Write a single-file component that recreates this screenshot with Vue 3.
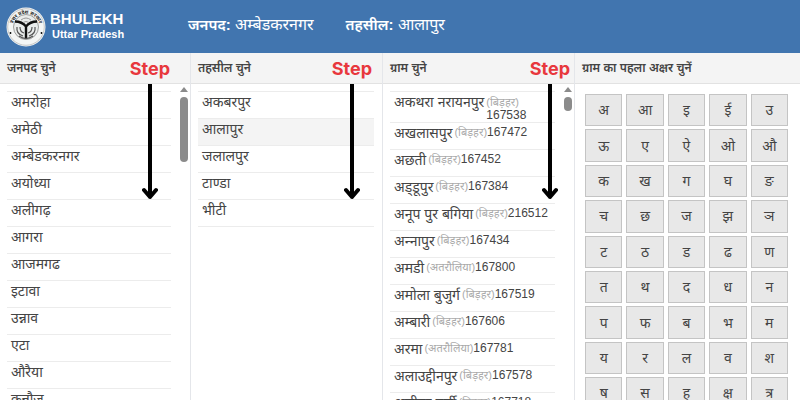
<script setup>
import { ref } from 'vue'

const districts = ['अमरोहा', 'अमेठी', 'अम्बेडकरनगर', 'अयोध्या', 'अलीगढ़', 'आगरा', 'आजमगढ', 'इटावा', 'उन्नाव', 'एटा', 'औरैया', 'कन्नौज']
const tehsils = ['अकबरपुर', 'आलापुर', 'जलालपुर', 'टाण्डा', 'भीटी']
const villages = [
  { name: 'अकथरा नरायनपुर', pargana: 'बिड़हर', code: '167538', wrap: true },
  { name: 'अखलासपुर', pargana: 'बिड़हर', code: '167472' },
  { name: 'अछती', pargana: 'बिड़हर', code: '167452' },
  { name: 'अड्\u200Cडूपुर', pargana: 'बिड़हर', code: '167384' },
  { name: 'अनूप पुर बगिया', pargana: 'बिड़हर', code: '216512' },
  { name: 'अन्\u200Dनापुर', pargana: 'बिड़हर', code: '167434' },
  { name: 'अमडी', pargana: 'अतरौलिया', code: '167800' },
  { name: 'अमोला बुजुर्ग', pargana: 'बिड़हर', code: '167519' },
  { name: 'अम्बारी', pargana: 'बिड़हर', code: '167606' },
  { name: 'अरमा', pargana: 'अतरौलिया', code: '167781' },
  { name: 'अलाउद्दीनपुर', pargana: 'बिड़हर', code: '167578' },
  { name: 'अलीपुर बर्सी', pargana: 'बिड़हर', code: '167718' }
]
const letters = 'अ आ इ ई उ ऊ ए ऐ ओ औ क ख ग घ ङ च छ ज झ ञ ट ठ ड ढ ण त थ द ध न प फ ब भ म य र ल व श ष स ह क्ष त्र'.split(' ')

const district = ref('अम्बेडकरनगर')
const tehsil = ref('आलापुर')
</script>

<template>
  <div class="page">
    <header class="topbar">
      <div class="brand">
        <svg class="logo" viewBox="0 0 40 40" aria-hidden="true">
          <defs>
            <path id="rim" d="M6.5 22a13.6 13.6 0 1 1 27 0" />
          </defs>
          <circle cx="20" cy="20" r="19.5" fill="#f4f6f5" />
          <circle cx="20" cy="20" r="18.3" fill="none" stroke="#999" stroke-width=".5" />
          <circle cx="20" cy="20" r="12.5" fill="#e9eceb" stroke="#666" stroke-width=".6" />
          <text class="rim-text"><textPath href="#rim" startOffset="50%" text-anchor="middle">उत्तर प्रदेश सरकार</textPath></text>
          <path d="M9 14.500q7 0 11 5q4-5 11-5M20 19v13" fill="none" stroke="#111" stroke-width="2.400" />
          <path d="M11 20q-1 7 6 9M29 20q1 7-6 9M14 20q0 5 4 6M26 20q0 5-4 6M13 29q7 5 14 0" fill="none" stroke="#555" stroke-width="1.200" />
          <path d="M15 13q5-4 10 0M17 15.500q3-2 6 0" fill="none" stroke="#999" />
          <circle cx="4.500" cy="26" r=".9" />
          <circle cx="35.500" cy="26" r=".9" />
        </svg>
        <div class="brand-text">
          <div class="brand-name">BHULEKH</div>
          <div class="brand-state">Uttar Pradesh</div>
        </div>
      </div>
      <div class="selection"><b>जनपद:</b> {{ district }}</div>
      <div class="selection"><b>तहसील:</b> {{ tehsil }}</div>
    </header>

    <main class="columns">
      <section class="column">
        <h2 class="column-title">जनपद चुने</h2>
        <div class="column-body">
          <ul class="list">
            <li v-for="d in districts" :key="d">
              <button class="item" @click="district = d">{{ d }}</button>
            </li>
          </ul>
          <div class="scrollbar">
            <i class="scroll-up"></i>
            <i class="thumb"></i>
          </div>
        </div>
        <div class="step">
          <span>Step</span>
          <svg viewBox="0 0 16 116" aria-hidden="true"><path d="M8-4v117M2 106l6 7l6-7" /></svg>
        </div>
      </section>

      <section class="column">
        <h2 class="column-title">तहसील चुने</h2>
        <div class="column-body">
          <ul class="list">
            <li v-for="t in tehsils" :key="t" :class="{ active: t === tehsil }">
              <button class="item" @click="tehsil = t">{{ t }}</button>
            </li>
          </ul>
        </div>
        <div class="step near">
          <span>Step</span>
          <svg viewBox="0 0 16 116" aria-hidden="true"><path d="M8-4v117M2 106l6 7l6-7" /></svg>
        </div>
      </section>

      <section class="column">
        <h2 class="column-title">ग्राम चुने</h2>
        <div class="column-body">
          <ul class="list">
            <li v-for="v in villages" :key="v.code">
              <button class="item village" :class="{ tall: v.wrap }">
                <span>{{ v.name }}</span>
                <span class="meta" :class="{ stacked: v.wrap }">
                  <span class="pargana">({{ v.pargana }})</span>
                  <span class="code">{{ v.code }}</span>
                </span>
              </button>
            </li>
          </ul>
          <div class="scrollbar">
            <i class="scroll-up"></i>
            <i class="thumb short"></i>
          </div>
        </div>
        <div class="step edge">
          <span>Step</span>
          <svg viewBox="0 0 16 116" aria-hidden="true"><path d="M8-4v117M2 106l6 7l6-7" /></svg>
        </div>
      </section>

      <section class="column">
        <h2 class="column-title">ग्राम का पहला अक्षर चुनें</h2>
        <div class="letters">
          <button v-for="l in letters" :key="l" class="letter">{{ l }}</button>
        </div>
      </section>
    </main>
  </div>
</template>

<style>
body {
  margin: 0;
}
</style>

<style scoped>
.page {
  height: 100vh;
  overflow: hidden;
  display: flex;
  flex-direction: column;
  background: #fff;
  color: #444;
  font-family: "Liberation Sans", "Noto Sans Devanagari", "Noto Sans", sans-serif;
}
.topbar {
  flex: none;
  display: flex;
  align-items: center;
  gap: 32px;
  height: 53px;
  padding-left: 6px;
  box-sizing: border-box;
  background: #4175af;
  color: #fff;
}
.brand {
  display: flex;
  align-items: center;
  gap: 4px;
  width: 150px;
}
.logo {
  width: 40px;
  height: 40px;
}
.rim-text {
  font-size: 5px;
  font-weight: 700;
  fill: #222;
}
.brand-text {
  padding-bottom: 2px;
  font-weight: 700;
  white-space: nowrap;
}
.brand-name {
  font-size: 15px;
  line-height: 16px;
}
.brand-state {
  padding-left: 2px;
  font-size: 11px;
  line-height: 14px;
}
.selection {
  font-size: 16px;
  white-space: nowrap;
}
.selection b {
  font-size: 15px;
  font-weight: 600;
}
.columns {
  flex: 1;
  min-height: 0;
  display: grid;
  grid-template-columns: 190fr 192fr 192fr 226fr;
}
.column {
  position: relative;
  min-width: 0;
}
.column + .column {
  border-left: 1px solid #e4e6ea;
}
.column-title {
  height: 31px;
  margin: 0;
  padding-left: 7px;
  box-sizing: border-box;
  border-bottom: 1px solid #e2e2e2;
  background: #f4f4f4;
  font-size: 12px;
  font-weight: 600;
  line-height: 30px;
  white-space: nowrap;
}
.column-body {
  display: flex;
  justify-content: space-between;
}
.list {
  flex: 1;
  min-width: 0;
  margin: 7px 8px 0 7px;
  padding: 0;
  list-style: none;
  border-bottom: 1px solid #ececec;
}
.list li {
  border-top: 1px solid #ececec;
}
.list .active {
  background: #f4f4f4;
}
.item {
  display: block;
  width: 100%;
  height: 26px;
  padding: 0 4px 6px;
  border: 0;
  background: none;
  color: inherit;
  font: 14px/20px "Liberation Sans", "Noto Sans Devanagari", "Noto Sans", sans-serif;
  text-align: left;
  white-space: nowrap;
  cursor: pointer;
}
.village {
  display: flex;
  gap: 2px;
}
.tall {
  height: 30px;
  padding-bottom: 0;
}
.meta {
  display: flex;
  line-height: 18px;
}
.stacked {
  flex-direction: column;
  padding-top: 4px;
  line-height: 13px;
}
.pargana {
  color: #aaa;
  font-size: 11px;
}
.code {
  font-size: 12px;
}
.scrollbar {
  display: flex;
  flex-direction: column;
  align-items: center;
  gap: 5px;
  width: 10px;
  margin-right: 1px;
  padding-top: 3px;
}
.scroll-up {
  border: 4px solid transparent;
  border-top: 0;
  border-bottom: 5px solid #8b8b8b;
}
.thumb {
  width: 8px;
  height: 65px;
  border-radius: 4px;
  background: #8b8b8b;
}
.short {
  height: 14px;
}
.step {
  position: absolute;
  top: 4px;
  right: 20px;
  display: flex;
  flex-direction: column;
  align-items: center;
  gap: 3px;
  color: #e8383d;
  font: 700 18px/24px Inter, "Noto Sans", sans-serif;
  pointer-events: none;
}
.near {
  right: 10px;
}
.edge {
  right: 4px;
}
.step svg {
  width: 16px;
  height: 116px;
  fill: none;
  stroke: #000;
  stroke-width: 4;
  stroke-linecap: round;
  stroke-linejoin: round;
}
.letters {
  display: grid;
  grid-template-columns: repeat(5, 1fr);
  gap: 3px 4px;
  margin: 10px 12px 0 10px;
}
.letter {
  aspect-ratio: 15 / 13;
  min-width: 0;
  padding: 0;
  border: 1px solid #c4c4c4;
  background: #e8e8e8;
  color: #444;
  font: 14px/20px "Liberation Sans", "Noto Sans Devanagari", "Noto Sans", sans-serif;
  cursor: pointer;
}
</style>
